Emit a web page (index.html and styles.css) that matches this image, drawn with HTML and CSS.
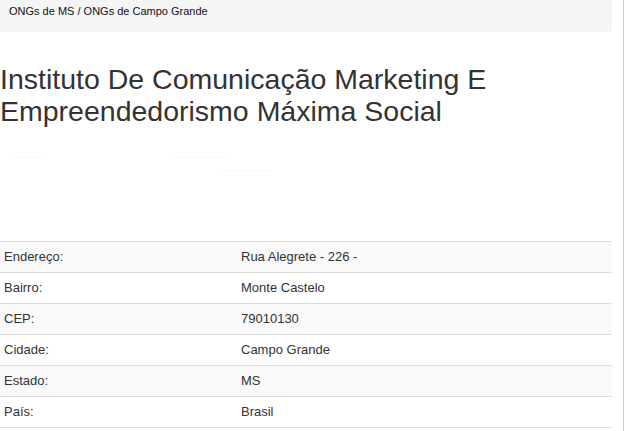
FILE: index.html
```html
<!DOCTYPE html>
<html lang="pt-BR">
<head>
    <meta charset="UTF-8">
    <meta name="viewport" content="width=device-width, initial-scale=1.0">
    <title>Instituto De Comunicação Marketing E Empreendedorismo Máxima Social</title>
    <link rel="stylesheet" href="styles.css">
</head>
<body>
    <div class="page">
        <main class="content">
            <div class="breadcrumb">ONGs de MS / ONGs de Campo Grande</div>

            <h2 class="ong-title">Instituto De Comunicação Marketing E Empreendedorismo Máxima Social</h2>

            <div class="share">
                <span class="share-a"></span>
                <span class="share-b"></span>
                <span class="share-c"></span>
            </div>

            <table class="info">
                <tr><td>Endereço:</td><td>Rua Alegrete - 226 -</td></tr>
                <tr><td>Bairro:</td><td>Monte Castelo</td></tr>
                <tr><td>CEP:</td><td>79010130</td></tr>
                <tr><td>Cidade:</td><td>Campo Grande</td></tr>
                <tr><td>Estado:</td><td>MS</td></tr>
                <tr><td>País:</td><td>Brasil</td></tr>
            </table>
        </main>
        <aside class="side"></aside>
    </div>
</body>
</html>
```

FILE: styles.css
```css
*{
    padding: 0;
    margin: 0;
    box-sizing: border-box;
}
body{
    font-family: "Liberation Sans", Arial, sans-serif;
    color: #333;
    background: #fff;
    overflow: hidden;
}
.page{
    display: flex;
    gap: 11px;
    height: 431px;
}
.content{
    width: 612px;
}
.side{
    border-left: 1px solid #ccc;
    height: 100%;
}
.breadcrumb{
    height: 32px;
    padding: 3px 9px 0;
    background: #f5f5f5;
    border-bottom-right-radius: 4px;
    font-size: 11px;
    line-height: 16px;
    color: #111;
}
.ong-title{
    margin-top: 31px;
    font-size: 28.5px;
    font-weight: 500;
    line-height: 32px;
    color: #333;
}
.share{
    position: relative;
    height: 114px;
}
/* sharing widgets that never finished loading */
.share span{
    position: absolute;
    height: 1px;
    background: #f7f7f7;
}
.share-a{ left: 12px; top: 30px; width: 30px; }
.share-b{ left: 173px; top: 30px; width: 55px; }
.share-c{ left: 221px; top: 43px; width: 52px; }
.info{
    width: 100%;
    border-collapse: collapse;
    font-size: 13px;
}
.info td{
    padding: 8px 4px 8px;
    line-height: 14px;
    border-top: 1px solid #ddd;
}
.info td:first-child{
    width: 237px;
}
.info tr:nth-child(odd){
    background: #f9f9f9;
}
.info tr:last-child td{
    border-bottom: 1px solid #ddd;
}
```
